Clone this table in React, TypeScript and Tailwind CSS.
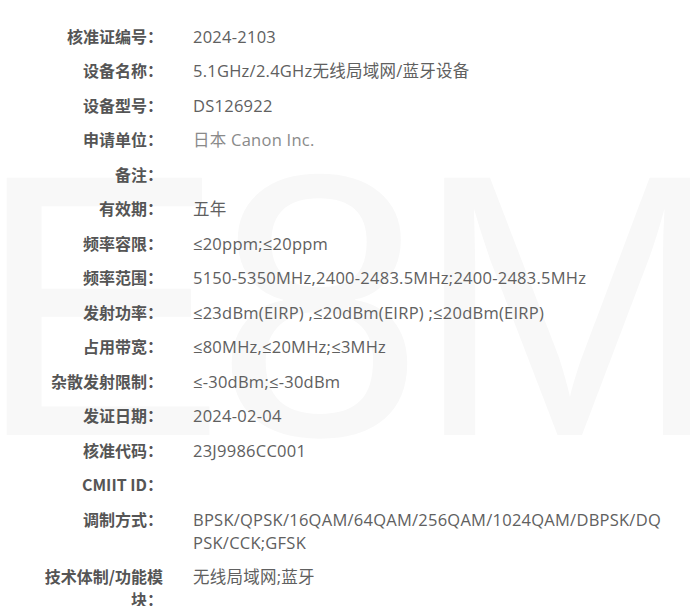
const rows: { label: React.ReactNode; value: React.ReactNode; muted?: boolean }[] = [
  { label: "核准证编号：", value: "2024-2103" },
  { label: "设备名称：", value: "5.1GHz/2.4GHz无线局域网/蓝牙设备" },
  { label: "设备型号：", value: "DS126922" },
  { label: "申请单位：", value: "日本 Canon Inc.", muted: true },
  { label: "备注：", value: "" },
  { label: "有效期：", value: "五年" },
  { label: "频率容限：", value: "≤20ppm;≤20ppm" },
  { label: "频率范围：", value: "5150-5350MHz,2400-2483.5MHz;2400-2483.5MHz" },
  { label: "发射功率：", value: "≤23dBm(EIRP) ,≤20dBm(EIRP) ;≤20dBm(EIRP)" },
  { label: "占用带宽：", value: "≤80MHz,≤20MHz;≤3MHz" },
  { label: "杂散发射限制：", value: "≤-30dBm;≤-30dBm" },
  { label: "发证日期：", value: "2024-02-04" },
  { label: "核准代码：", value: "23J9986CC001" },
  { label: "CMIIT ID：", value: "" },
  {
    label: "调制方式：",
    value: (
      <>
        BPSK/QPSK/16QAM/64QAM/256QAM/1024QAM/DBPSK/DQ
        <br />
        PSK/CCK;GFSK
      </>
    ),
  },
  {
    label: (
      <>
        技术体制/功能模
        <br />
        块：
      </>
    ),
    value: "无线局域网;蓝牙",
  },
];

export default function App() {
  return (
    <div className="relative w-[690px] h-[606px] overflow-hidden bg-white">
      {/* faint watermark behind the table */}
      <div
        aria-hidden="true"
        className="absolute left-[-24px] top-[118px] select-none whitespace-nowrap text-[374px] leading-none tracking-[-10px] text-[#f8f8f8]"
        style={{ fontFamily: '"Liberation Sans", Arial, sans-serif' }}
      >
        E8M
      </div>
      <div
        className="relative pt-[19px]"
        style={{ fontFamily: '"Open Sans", "Noto Sans CJK SC", sans-serif' }}
      >
        {rows.map((r, i) => (
          <div key={i} className="flex py-[5.75px] leading-[23px]">
            <div
              className="w-[163px] shrink-0 text-right text-[16px] font-bold text-[#555]"
              style={{ fontFamily: '"Noto Sans CJK SC", "Open Sans", sans-serif' }}
            >
              {r.label}
            </div>
            <div
              className={
                "ml-[30px] whitespace-nowrap text-[16.5px] tracking-[0.25px] " +
                (r.muted ? "text-[#8a8a8a]" : "text-[#606060]")
              }
            >
              {r.value}
            </div>
          </div>
        ))}
      </div>
    </div>
  );
}
